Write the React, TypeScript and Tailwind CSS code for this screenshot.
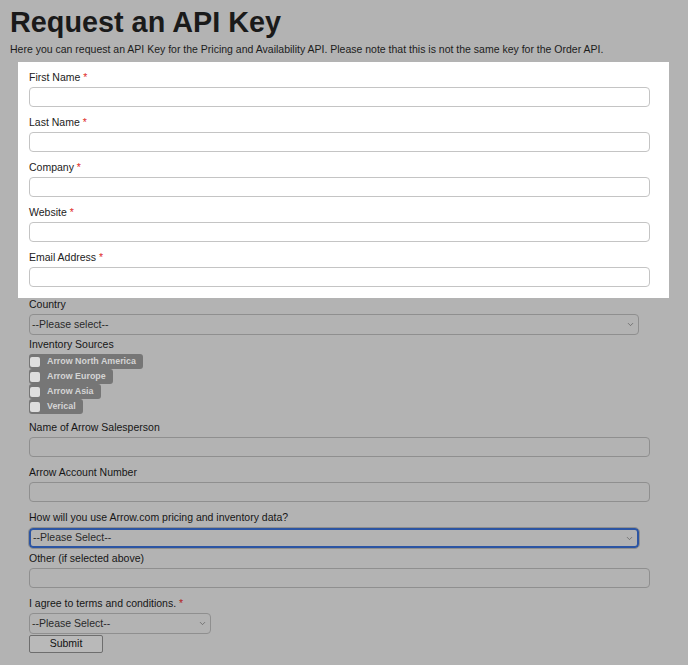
import { ChevronDown } from "lucide-react";

const font = "font-['Liberation_Sans',Arial,Helvetica,sans-serif]";

const panelFields = ["First Name", "Last Name", "Company", "Website", "Email Address"];
const sources = ["Arrow North America", "Arrow Europe", "Arrow Asia", "Verical"];

const Label = ({ text, required, dim }: { text: string; required?: boolean; dim?: boolean }) => (
  <div className={`text-[10.5px] leading-[13px] ${dim ? "text-[#161616]" : "text-[#222]"}`}>
    {text}
    {required && <span className={dim ? "text-[#b31f1f]" : "text-[#e02b2b]"}> *</span>}
  </div>
);

const Select = ({ text, className }: { text: string; className: string }) => (
  <div className={`relative flex items-center rounded-[4px] text-[10.5px] text-[#2a2a2a] ${className}`}>
    <span className="pl-[2px]">{text}</span>
    <ChevronDown className="absolute right-[3px] h-[9px] w-[9px] text-[#555]" strokeWidth={1.75} />
  </div>
);

const App = () => {
  return (
    <div className={`min-h-screen w-[688px] bg-[#b3b3b3] ${font}`}>
      <div className="pl-[10px]">
        <h1 className="pt-[8px] text-[28.8px] leading-[29px] font-bold text-[#1a1a1a]">Request an API Key</h1>
        <p className="mt-[6px] text-[10.5px] leading-[13px] text-[#1c1c1c]">
          Here you can request an API Key for the Pricing and Availability API. Please note that this is not the same
          key for the Order API.
        </p>
      </div>

      <div className="ml-[29px] w-[621px]">
        <div className="mt-[6px] ml-[-11px] w-[651px] bg-white pt-[9px] pb-[11px] pl-[11px] pr-[19px]">
          {panelFields.map((f, i) => (
            <div key={f} className={i > 0 ? "mt-[9px]" : ""}>
              <Label text={f} required />
              <div className="mt-[3px] h-[20px] w-[621px] rounded-[4px] border border-[#c4c4c4] bg-white" />
            </div>
          ))}
        </div>

        <Label text="Country" dim />
        <Select text="--Please select--" className="mt-[3px] h-[21px] w-[610px] border border-[#8f8f8f]" />

        <div className="mt-[3px]">
          <Label text="Inventory Sources" dim />
        </div>
        <div className="mt-[3px] flex flex-col items-start">
          {sources.map((s) => (
            <div key={s} className="flex h-[15px] items-center rounded-[3px] bg-[#767676] pl-[1px] pr-[7px]">
              <span className="h-[10px] w-[10px] rounded-[2px] bg-[#dedede]" />
              <span className="ml-[7px] text-[8.9px] font-bold text-[#d4d4d4]">{s}</span>
            </div>
          ))}
        </div>

        <div className="mt-[7px]">
          <Label text="Name of Arrow Salesperson" dim />
          <div className="mt-[3px] h-[20px] w-[621px] rounded-[4px] border border-[#8f8f8f]" />
        </div>
        <div className="mt-[9px]">
          <Label text="Arrow Account Number" dim />
          <div className="mt-[3px] h-[20px] w-[621px] rounded-[4px] border border-[#8f8f8f]" />
        </div>
        <div className="mt-[9px]">
          <Label text="How will you use Arrow.com pricing and inventory data?" dim />
          <Select
            text="--Please Select--"
            className="mt-[4px] h-[20px] w-[610px] border-2 border-[#2c55a3] outline outline-1 outline-[#8f8f8f]"
          />
        </div>
        <div className="mt-[4px]">
          <Label text="Other (if selected above)" dim />
          <div className="mt-[3px] h-[20px] w-[621px] rounded-[4px] border border-[#8f8f8f]" />
        </div>
        <div className="mt-[9px]">
          <Label text="I agree to terms and conditions." required dim />
          <Select text="--Please Select--" className="mt-[3px] h-[21px] w-[182px] border border-[#8f8f8f]" />
        </div>
        <button
          type="button"
          className="mt-[1px] flex h-[18px] w-[74px] items-center justify-center rounded-[2px] border border-[#6e6e6e] bg-[#b9b9b9] text-[10.5px] text-[#111]"
        >
          Submit
        </button>
      </div>
    </div>
  );
};

export default App;
